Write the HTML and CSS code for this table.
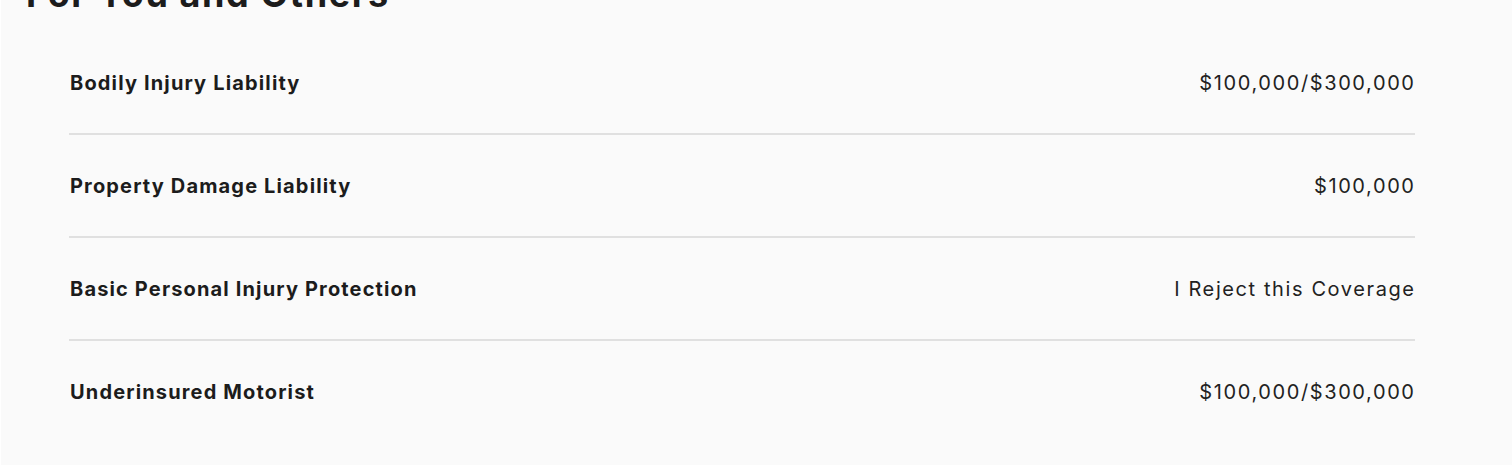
FILE: index.html
```html
<!DOCTYPE html>
<html lang="en">
<head>
<meta charset="utf-8">
<title>Coverage</title>
<link rel="stylesheet" href="styles.css">
</head>
<body>
  <section class="card">
    <h2 class="title">For You and Others</h2>
    <div class="rows">
      <div class="row">
        <span class="label">Bodily Injury Liability</span>
        <span class="value">$100,000/$300,000</span>
      </div>
      <div class="row">
        <span class="label">Property Damage Liability</span>
        <span class="value">$100,000</span>
      </div>
      <div class="row">
        <span class="label">Basic Personal Injury Protection</span>
        <span class="value">I Reject this Coverage</span>
      </div>
      <div class="row">
        <span class="label">Underinsured Motorist</span>
        <span class="value">$100,000/$300,000</span>
      </div>
    </div>
  </section>
</body>
</html>
```

FILE: styles.css
```css
html, body {
  margin: 0;
  padding: 0;
  background: #ffffff;
}

body {
  font-family: Inter, "Liberation Sans", sans-serif;
  color: #1c1c1c;
  overflow: hidden;
}

.card {
  margin-left: 1px;
  background: #fafafa;
  padding: 0 97px 23px 68px;
}

.title {
  margin: -26px 0 18px -43px;
  font-size: 36px;
  line-height: 40px;
  font-weight: 700;
  letter-spacing: 1.6px;
}

.rows {
  display: flex;
  flex-direction: column;
}

.row {
  display: flex;
  justify-content: space-between;
  align-items: center;
  height: 101px;
  border-bottom: 2px solid #e0e0e0;
}

.row:last-child {
  border-bottom: none;
}

.label {
  font-size: 20px;
  font-weight: 700;
  letter-spacing: 1.15px;
  margin-left: 1px;
}

.value {
  font-size: 20px;
  font-weight: 400;
  color: #222222;
  letter-spacing: 1.6px;
  margin-right: -0.6px;
}
```
